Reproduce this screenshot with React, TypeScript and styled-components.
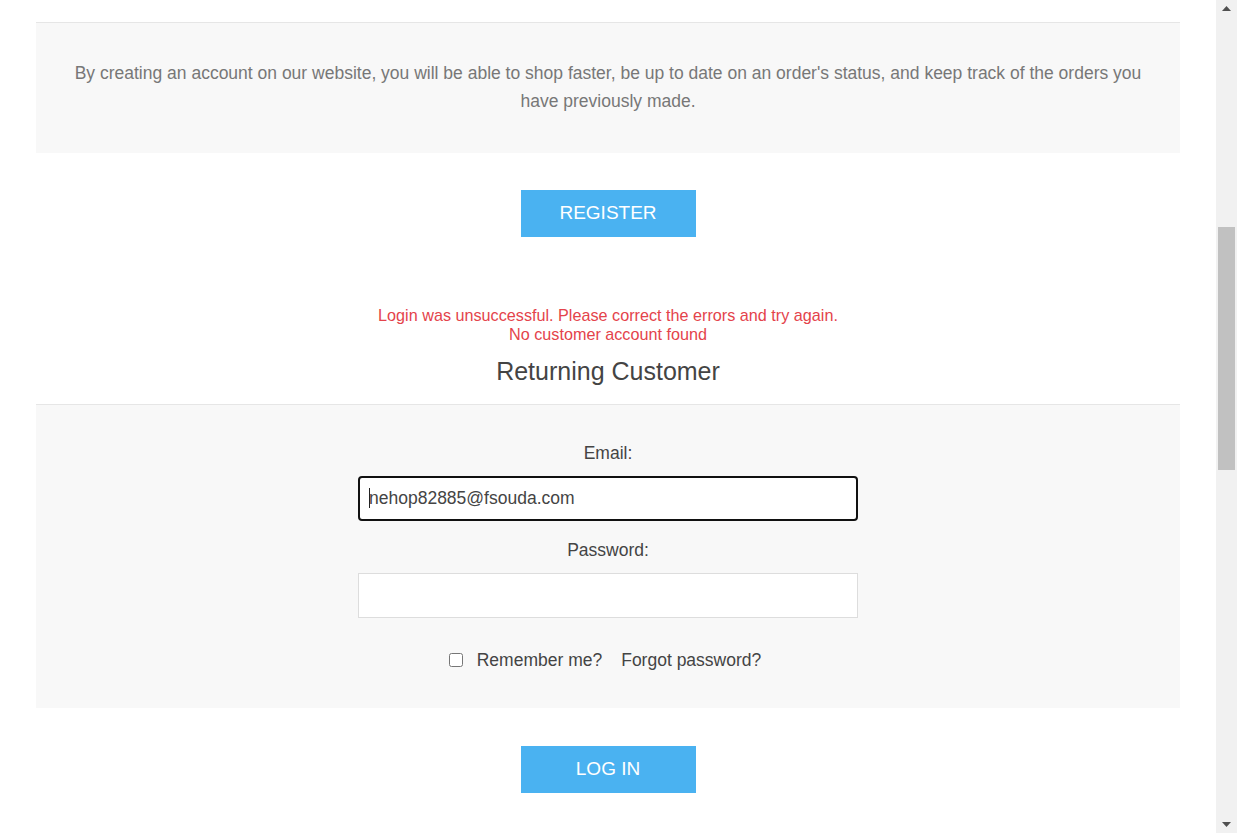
import React from "react";
import styled, { createGlobalStyle } from "styled-components";

const Global = createGlobalStyle`
  html, body { margin: 0; padding: 0; overflow: hidden; background: #fff; }
  body { font-family: "Liberation Sans", Arial, sans-serif; }
  * { box-sizing: border-box; }
`;

const Screen = styled.div`
  display: flex;
  width: 1237px;
  height: 833px;
  overflow: hidden;
`;

const Main = styled.main`
  flex: 1;
  padding: 22px 36px 0;
  display: flex;
  flex-direction: column;
  align-items: stretch;
`;

const Panel = styled.section`
  background: #f8f8f8;
  border-top: 1px solid #e6e6e6;
`;

const InfoText = styled.p`
  margin: 0;
  padding: 36px 30px 38px;
  text-align: center;
  font-size: 17.5px;
  line-height: 28px;
  color: #777;
`;

const ButtonRow = styled.div<{ $top: number }>`
  display: flex;
  justify-content: center;
  margin-top: ${(p) => p.$top}px;
`;

const BlueButton = styled.button`
  width: 175px;
  height: 47px;
  border: none;
  background: #4ab2f1;
  color: #fff;
  font-family: "Liberation Sans", Arial, sans-serif;
  font-size: 19px;
  line-height: 46px;
  text-transform: uppercase;
  cursor: pointer;
  padding: 0 0 1px;
`;

const Errors = styled.div`
  margin-top: 69px;
  text-align: center;
  color: #e4434b;
  font-size: 16.2px;
  line-height: 19px;
`;

const Title = styled.h2`
  margin: 12px 0 0;
  padding-bottom: 18px;
  text-align: center;
  font-weight: normal;
  font-size: 25px;
  line-height: 30px;
  color: #444;
`;

const Form = styled.div`
  padding: 38px 0 38px;
  display: flex;
  flex-direction: column;
  align-items: center;
`;

const Label = styled.label<{ $top?: number }>`
  display: block;
  margin-top: ${(p) => p.$top ?? 0}px;
  margin-bottom: 13px;
  font-size: 17.5px;
  line-height: 20px;
  color: #444;
`;

const FieldWrap = styled.div`
  position: relative;
  width: 500px;
  height: 45px;
`;

const TextInput = styled.input<{ $focused?: boolean }>`
  width: 100%;
  height: 100%;
  background: #fff;
  border: ${(p) => (p.$focused ? "2px solid #111" : "1px solid #ddd")};
  border-radius: ${(p) => (p.$focused ? "4px" : "0")};
  padding: 0 ${(p) => (p.$focused ? "9px" : "10px")};
  font-family: "Liberation Sans", Arial, sans-serif;
  font-size: 17.5px;
  color: #444;
  outline: none;
`;

const Caret = styled.span`
  position: absolute;
  left: 11px;
  top: 12px;
  width: 1px;
  height: 20px;
  background: #222;
`;

const Options = styled.div`
  margin-top: 32px;
  padding-right: 6px;
  display: flex;
  align-items: center;
  font-size: 17.5px;
  line-height: 20px;
  color: #444;
`;

const Check = styled.input`
  width: 14px;
  height: 14px;
  margin: 0 14px 0 0;
`;

const OptLabel = styled.span`
  margin-right: 19px;
`;

const Link = styled.a`
  color: #444;
  text-decoration: none;
`;

const Scrollbar = styled.div`
  width: 21px;
  background: #f1f1f1;
  display: flex;
  flex-direction: column;
  align-items: center;
`;

const Arrow = styled.div`
  height: 17px;
  width: 100%;
  display: flex;
  align-items: center;
  justify-content: center;
`;

const Track = styled.div`
  flex: 1;
  width: 100%;
  padding: 210px 2px 0;
`;

const Thumb = styled.div`
  height: 243px;
  background: #c1c1c1;
`;

export default function App() {
  return (
    <>
      <Global />
      <Screen>
        <Main>
          <Panel>
            <InfoText>
              By creating an account on our website, you will be able to shop faster, be up to date on an order's status,
              and keep track of the orders you have previously made.
            </InfoText>
          </Panel>
          <ButtonRow $top={37}>
            <BlueButton>Register</BlueButton>
          </ButtonRow>
          <Errors>
            <div>Login was unsuccessful. Please correct the errors and try again.</div>
            <div>No customer account found</div>
          </Errors>
          <Title>Returning Customer</Title>
          <Panel>
            <Form>
              <Label>Email:</Label>
              <FieldWrap>
                <TextInput $focused type="email" defaultValue="nehop82885@fsouda.com" />
                <Caret />
              </FieldWrap>
              <Label $top={19}>Password:</Label>
              <FieldWrap>
                <TextInput type="password" />
              </FieldWrap>
              <Options>
                <Check type="checkbox" />
                <OptLabel>Remember me?</OptLabel>
                <Link href="#">Forgot password?</Link>
              </Options>
            </Form>
          </Panel>
          <ButtonRow $top={38}>
            <BlueButton>Log in</BlueButton>
          </ButtonRow>
        </Main>
        <Scrollbar>
          <Arrow>
            <svg width="9" height="5" viewBox="0 0 9 5">
              <path d="M0 5 L4.5 0 L9 5 Z" fill="#505050" />
            </svg>
          </Arrow>
          <Track>
            <Thumb />
          </Track>
          <Arrow>
            <svg width="9" height="5" viewBox="0 0 9 5">
              <path d="M0 0 L4.5 5 L9 0 Z" fill="#505050" />
            </svg>
          </Arrow>
        </Scrollbar>
      </Screen>
    </>
  );
}
